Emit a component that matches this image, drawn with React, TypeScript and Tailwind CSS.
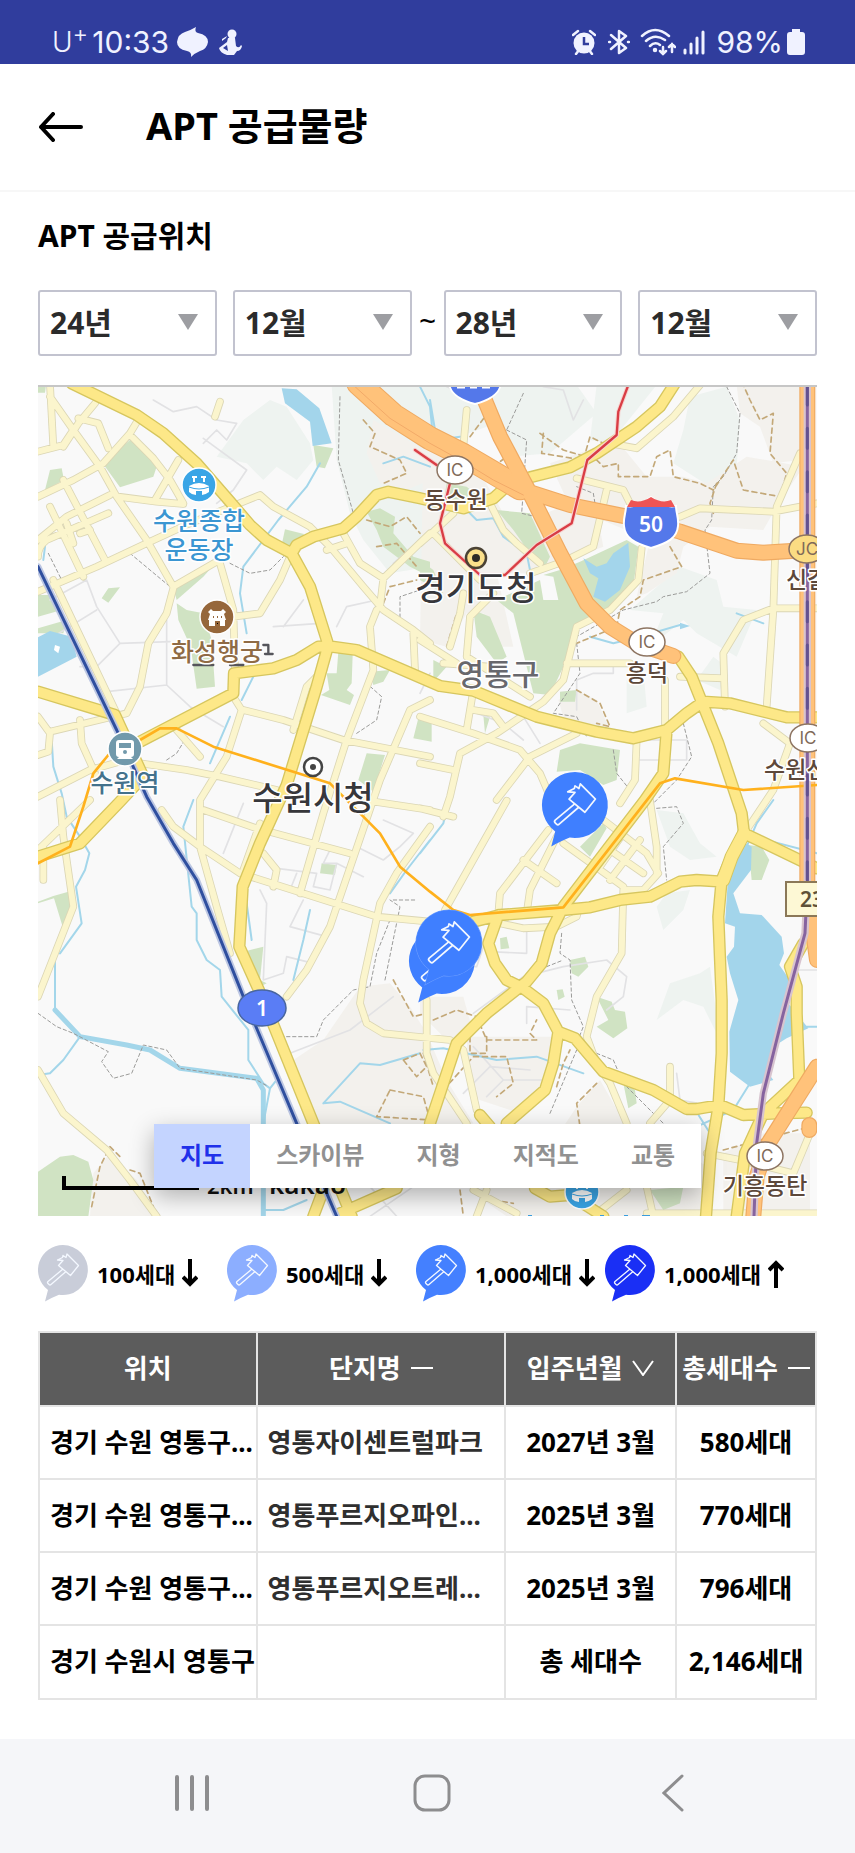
import React, { useState } from 'react';

interface Supply {
  location: string;
  name: string;
  moveIn: string;
  households: string;
}

const supplies: Supply[] = [
  { location: '경기 수원 영통구...', name: '영통자이센트럴파크', moveIn: '2027년 3월', households: '580세대' },
  { location: '경기 수원 영통구...', name: '영통푸르지오파인...', moveIn: '2025년 3월', households: '770세대' },
  { location: '경기 수원 영통구...', name: '영통푸르지오트레...', moveIn: '2025년 3월', households: '796세대' },
];

const legend = [
  { label: '100세대', color: '#c9cdd9', up: false },
  { label: '500세대', color: '#8caeff', up: false },
  { label: '1,000세대', color: '#4480ff', up: false },
  { label: '1,000세대', color: '#1a2ff5', up: true },
];

const mapTypes = ['지도', '스카이뷰', '지형', '지적도', '교통'];
const years = ['24년', '25년', '26년', '27년', '28년'];
const months = ['1월', '2월', '3월', '4월', '5월', '6월', '7월', '8월', '9월', '10월', '11월', '12월'];

const terrain =
  'M560 230L640 120L720 60L770 80L840 190L850 240L800 300L740 260L700 300L650 250ZM905 15L1200 15V560L1080 580L1000 480L960 400L920 240ZM1200 15H1640L1700 100L1560 220L1440 230L1400 130L1200 200ZM1700 15L1880 15L1740 190L1680 180ZM1980 50L2090 20L2130 120L2120 260L2040 320L1930 250L1960 150ZM1950 560L2060 600L2080 680L2180 690L2120 830L2000 760L1960 720L1860 800L1900 700L1800 690ZM2050 830L2090 860L2070 930L2000 900ZM1790 900L1840 870L1850 980L1790 1000ZM1880 1290L1960 1300L2010 1390L2060 1430L1980 1440L1920 1400ZM1880 1580L1910 1540L1980 1530L1960 1590L1900 1650ZM1880 1920L1920 1810L2010 1780L2040 1760L2070 1980L2020 1880L1960 1860Z';
const land =
  'M1030 120L1200 220V300L1130 330L1050 310L1010 220ZM1180 200L1340 260L1420 400L1500 420L1690 340L1720 500L1500 580L1400 580L1450 800L1400 800L1360 700L1310 700L1250 800L1170 780ZM1560 250L1760 180L1850 290L1960 290L2030 310L2150 230L2320 260L2240 380L2200 450L2040 440L1960 500L1940 580L1850 640L1820 650L1860 480L1620 380ZM2120 15H2310V240L2230 250L2190 140L2130 100ZM760 2060L880 1980L990 1820L1080 1810L1140 1880L1190 1960L1250 2100L1330 2230L1180 2260L850 2230ZM1170 1850H1300L1330 1960L1250 1980L1170 1900ZM1310 1970L1580 1970L1560 2080L1470 2200L1320 2150ZM1640 2180L1710 2100L1790 2240L1900 2260L2030 2360V2509H1430L1330 2440L1560 2300ZM2080 2320L2200 2260H2340V2509H2080ZM190 2380L240 2320L320 2400L380 2509H180ZM1585 960L1640 930L1700 960L1740 1050L1600 1010Z';
const parks =
  'M300 180L385 245L370 290L270 322L218 250ZM60 270L95 265L102 300L45 330ZM24 15H48L45 38H24ZM440 670L470 690L520 700L545 780L555 920L500 926L482 800L445 720ZM765 448L822 462L790 512L755 495ZM430 625L560 545L520 590L440 660ZM215 655L235 625L270 622L235 668ZM24 645L75 645L95 690L24 710ZM24 745L110 720L100 760L24 760ZM925 815L968 825L965 910L950 930L972 945L960 975L873 945L898 930L890 880L920 880ZM1010 395L1050 385L1095 410L1090 460L1150 530L1200 545V590L1140 560L1060 500L1040 450ZM1020 875L1080 870L1060 905L1030 915ZM1010 1120L1065 1125L1030 1235L985 1200ZM1165 1015L1205 1025V1085L1150 1075ZM850 195L910 205L885 265L860 260ZM1650 545L1790 480L1825 500L1810 620L1740 700L1630 750L1600 860L1560 945L1510 940L1475 800L1450 700L1400 660L1530 600L1540 660H1585L1570 590L1540 585L1590 570ZM1330 690L1380 710L1430 830L1400 850L1340 770ZM1250 310L1310 320L1360 360L1290 395L1240 370ZM1400 390L1500 400L1560 530L1540 570L1500 520L1450 450ZM1170 540L1210 570L1240 640L1170 600ZM1590 1110L1650 1090L1770 1110L1760 1200L1720 1215L1650 1170L1580 1175ZM1590 935L1640 930L1635 965H1590ZM1210 840L1250 860L1210 905ZM1360 1005L1380 1010L1365 1060ZM24 1565L70 1548L115 1535L125 1580L98 1640L72 1555L24 1570ZM24 2375L90 2330L130 2325L175 2345L190 2400L175 2509H24ZM640 1715L700 1700L690 1800L710 1810L690 1820ZM875 1450L920 1455L915 1485L870 1480ZM1650 1400L1720 1330L1730 1345L1680 1430ZM1410 1675L1430 1670L1438 1705L1412 1708ZM1620 1740L1665 1730L1675 1760L1645 1790L1625 1780ZM1580 1830L1598 1828L1604 1850L1585 1860ZM1700 1940L1735 1920L1700 1850L1745 1865L1755 1890L1785 1895L1792 1945L1750 1975ZM2155 1395L2195 1400L2218 1440L2195 1500H2165ZM1780 2110L1815 2130L1820 2170L1795 2185ZM1860 2430L1960 2420L1950 2470L1900 2490Z';
const lakes =
  'M755 25L800 28L868 85L905 190L848 198L840 125L765 70ZM24 772L60 753L125 770L140 830L24 890ZM1660 535L1700 560L1730 550L1750 520L1795 488L1800 560L1770 630L1725 665L1690 650L1705 595L1680 580ZM2140 1385L2165 1400L2163 1470L2110 1540L2130 1600L2195 1605L2255 1670L2262 1720L2248 1755L2290 1815L2275 1870L2335 1945L2270 1975L2230 2000L2215 2080L2230 2100L2160 2120L2100 2075L2098 1955L2125 1860L2100 1780L2090 1730L2112 1700L2115 1640L2085 1630L2095 1480L2120 1440ZM1950 728L1980 738L1950 748Z';
const streams =
  'M870 250L830 320L745 420L640 560L630 640L650 760M670 890L635 960M600 1010L540 1150M24 470L45 500L40 540M65 1080L70 1160L95 1240L110 1310L150 1370L178 1420L165 1470L138 1520L155 1630L90 1720M75 1740V1890L150 1970L290 1995L360 2010L450 2065L680 2095L720 2125L740 2100M720 2125L700 2230V2509M490 1260L460 1340L485 1580L500 1600V1680L530 1740L570 1770L575 1850L655 1950V2040L700 2110M150 1970L100 2040L60 2080L24 2085M840 1590L820 1680L790 1800M650 1570L665 1680M880 2170L990 2050L1050 2055L1170 2020M880 2170L930 2165L1080 2230M1310 390L1340 420L1390 415L1420 470L1490 520L1500 570M1200 60L1220 180L1290 170M1170 20L1200 80L1210 180M1045 25V80M1060 250L1120 230L1200 260M1680 770L1750 790L1830 770L1950 735M2120 700L2200 730M2230 1260L2180 1330L2150 1400M2170 1370L2361 1420M2160 2110L2110 2190L2000 2240M2040 2260L1990 2180M1200 1380L1130 1470L1080 1540M1260 1250L1240 1330L1170 1420M1180 2010L1240 2005L1400 2040L1520 2030L1660 2080M700 2490L760 2490L830 2460M2330 1940H2361';
const localRoads =
  'M370 60L430 95L500 80L560 120L620 130L590 180L560 150L520 190M520 175L650 270L610 330L560 370M60 660L170 600L200 680L270 790L420 785M270 790L200 860L150 860M230 935L410 915L480 980L580 1040M410 915V720M70 770L200 690M730 740L870 730M760 740L820 660M920 740L950 680L1040 660M1090 550L1170 480M1250 20L1300 40M1540 20L1600 30L1630 120L1660 60M1640 990L1640 900L1690 880H1750V860M1830 1080H1970V1140H1830M580 1420L640 1270M690 1530L710 1570L700 1800L760 1780L770 1730L850 1750M780 1640L820 1560M780 1640L890 1670M740 1465L860 1480L850 1520L900 1530L920 1450L880 1450L900 1410M920 1450L1000 1490M800 1480L780 1530M1060 1320L1150 1360L1110 1400L1060 1440L980 1400M780 2020L960 1950L1090 1850M1380 1715L1490 1720V1640M1330 1900L1480 1790L1600 1760L1730 1740L1790 1790L1780 1850L1730 1890M1490 1930V1880L1620 1890M1330 2000L1420 2100L1370 2150M1420 2100L1540 2100M1300 2140L1380 2060L1500 2070M1940 2080L1950 2160L2060 2180M1150 2420L1020 2509M1020 2420L1100 2509M1170 1760H1340L1360 1700M1200 1020L1250 1040M1200 880L1170 940M1340 1000L1420 1030L1480 1080M1480 1010L1530 1090M2290 1770H2361';
const minorRoads =
  'M60 15L70 200M24 215L100 195L130 150M60 50L130 150L210 260L260 350L350 480L430 620M195 70L145 130L100 200M145 115L205 130L235 205M24 350L130 300L220 250L300 160L330 110M300 165L370 235L420 300L460 370M24 480L110 410L240 345M265 350L380 365L460 372M445 240L375 360M100 300L225 540M60 380L160 590M24 635L200 560L350 490L480 430L690 345L730 380L840 440L900 500L1000 620L1060 690L1150 750L1200 790M24 530Q24 500 50 480L235 400M110 430L130 490M150 460L180 450M430 620L560 545M430 625L410 700L355 790L330 920L290 1000L60 1055M24 1010L60 1060L55 1115L24 1125M150 1020L155 1090L200 1190M570 550L610 690L615 870M610 710L690 700L750 600L780 530M24 1250L180 1170L270 1145M70 600L260 1000M440 1050L510 1130M640 990L760 1020L940 1080L1200 1130M610 950L635 990L590 1130L510 1260V1400L560 1580L600 1720M330 1150L470 1170L570 1190L740 1230M880 870L830 920L790 1050M1040 690L1020 740L1030 870L950 1080L880 1300L810 1540M1150 760L1155 870M1200 960L1140 990L1050 1200L920 1580L900 1640L830 1770L770 1850M940 460L990 550L1060 595L1200 460M1060 595L1050 680M890 510L950 490M570 65L555 110M1310 90L1300 200M1170 490L1210 455L1270 400M1385 380L1420 450L1460 490L1530 550M1210 460L1350 600M1500 580L1600 545L1690 500L1730 330M1640 295L1780 330L1800 370M1835 505L1825 600L1740 690L1640 740L1600 900L1540 965M1610 850H1800M1170 780L1280 850M1300 640L1290 700L1260 800M1390 640L1320 710L1310 830L1500 950M1240 850L1380 860M1540 965L1400 1060L1290 1120L1260 1250L1240 1310M1330 930L1310 1050M1330 990L1390 1000L1420 1040M1170 1010L1330 1060L1470 1110L1530 1180L1560 1250M1170 1150L1270 1170M1640 1060L1500 1130L1400 1260M1200 1340L1100 1480L1050 1570L1000 1800L990 1870L1010 1930L1060 1960L1260 1980L1300 2010L1340 2190M1820 1080L1815 1200L1770 1270M1905 900V1040M1950 890L2080 895M2361 685H2230L2140 720L2080 820L2085 980M1950 410L2010 385L2230 395L2361 370M2310 220L2240 380L2230 690L2210 980M2010 15L1930 110L1820 205L1740 190M2200 1030L2280 1090L2230 1230L2150 1350M24 1850L130 1580L100 1370L90 1260M24 1410L180 1260M395 1290L430 1340L510 1400L630 1480L1040 1610L1200 1625M520 1290L680 1345L960 1420M700 1420L740 1470L730 1520M690 1330L640 1470M40 1500V1400M1000 1260L1200 1290M24 2070L100 2200L230 2310L300 2400L380 2509M1190 1860V2020L1210 2080L1310 2230M1430 1262L1245 1590M1170 1285L1270 1310M1555 1350L1410 1540L1405 1600M1580 1370L1500 1530L1490 1600M1480 1440L1580 1510M1600 1390L1780 1520M1720 1320L1850 1420L1885 1480L1840 1530H1780L1775 1720L1700 1850L1670 1970L1700 2050L1740 2110L1790 2230M1860 1262L1880 1400V1480M1830 1380L1740 1500M1780 1360L1710 1460M1740 1410L1840 1480M1410 1630L1480 1645L1580 1640L1640 1610L1645 1590M1920 2060V2160L1860 2230M2030 2320L2130 2340L2290 2380L2340 2260M1850 2500H2361M1330 2430L1460 2500M1850 2420L1870 2509M1340 2509L1370 2430M1700 2500L1790 2430';
const mainRoads =
  'M125 10L320 105L400 160L500 250L600 365L660 435L710 480L785 520L840 620L895 795L860 920L770 1215L690 1390L638 1520L628 1700L700 1860L850 2230L965 2509M785 520L800 495L850 470L940 445L980 410L1040 345L1075 335L1170 355L1300 385L1390 355L1440 310L1500 292L1620 262L1700 220L1820 140L1890 80L1935 10M24 935L255 1005L340 1190L270 1265L150 1390L24 1430M330 1085L610 940L612 880L730 865L800 840L865 800H905L980 810L1230 918L1330 932L1520 1010L1700 1055L1810 1075L1910 1050L1970 1000L2020 965L2100 970L2270 1012H2361M1945 830L1985 890L2015 965L2065 1090L2135 1300L2142 1360L2105 1430L2075 1500L2065 1610L2075 1860V2020L2065 2180L2042 2320L2028 2509M1910 1050L1900 1180L1845 1260L1600 1580L1560 1660L1535 1750L1490 1805L1370 1900L1280 1990L1240 2110L1200 2230M1330 1625L1410 1605L1600 1590L1680 1582L1770 1560L1860 1550L1950 1505L2000 1500L2075 1505M1405 1605L1375 1690L1395 1750L1430 1800L1480 1825L1540 1870L1585 1955L1570 2050L1545 2130L1430 2230M1585 1955L1635 1975L1720 2075L1870 2130L1970 2187H2000L2070 2175L2140 2205L2240 2200L2330 2198M2142 1360L2361 1465M2320 1690L2280 1760L2300 1820V1900L2308 2100L2200 2200L2145 2320L2120 2509M850 2509L880 2430M930 2500L1100 2425M1515 2425L1560 2450L1620 2445L1720 2509M1350 2205L1380 2240';
const lakeRoads = 'M2142 1360L2105 1430L2080 1500';
const highways =
  'M985 10L1090 105L1200 180L1300 225L1480 330L1620 375L1790 410L1950 455L2120 512L2200 518L2330 510M1360 50L1410 170L1500 340L1590 520L1670 670L1740 740L1820 790L1930 828M2332 10V1530L2361 1740M2361 2060L2215 2290L2180 2390L2170 2509M2338 2235V2250';
const borders =
  'M300 520L420 620M600 550L660 580L720 570L760 530M55 520L95 600M980 1060L1040 1020L1055 950L1010 910M930 50L925 240L970 400M1110 730V650L1170 630M410 1140L440 1120L470 1070M24 1900L80 1940L130 1960L235 2015L215 2045L250 2095L305 2080L340 1995L410 2010L450 2065L680 2100L715 2120M1065 1800L1110 1580L1080 1560M1090 1560H1160M1080 1620L1040 1720L1020 1820L970 1830L880 1920L860 1970L760 1970M1430 150L1490 180L1480 320M1480 40L1430 150M1480 330L1475 400L1560 420M1640 320L1690 340L1700 400M2090 20L2130 100L2120 220L2080 290L2050 320L2045 420L2025 450L2040 580L1970 635L1900 650L1880 665L1780 690L1640 770M1640 790L1650 880L1570 1000L1640 1010L1670 1070M1960 1030L1985 1130L1940 1200L1860 1280M1750 1110L1760 1180L1800 1230M1880 1285L1940 1280L1960 1330L1900 1400L1910 1500M1595 1660L1590 1720L1620 1740L1625 1860L1660 1940L1640 1990M1550 1760L1600 1740M1700 2020L1750 2040L1780 2110L1900 2230M1560 2200L1640 2010';
const parkTrails =
  'M1000 120L1035 160L1020 200L1110 240L1130 280L1060 310M1010 420L1080 440L1130 410L1170 460M1040 500L1100 490L1160 560M1060 670L1080 620L1160 600M1530 160L1600 210L1700 240L1720 260L1765 250V290L1860 290L1880 230L1920 210L1930 290L2010 310L2050 330L2110 240L2140 330L2250 350L2270 280L2220 220L2230 100L2190 120L2160 60L2140 15M1540 160L1535 220L1660 240L1680 170L1740 200M1320 170L1380 90L1350 20M1390 260L1430 230M1920 500L1955 560L1840 600L1830 650L1770 690L1760 740L1640 790M2060 310L2040 370L2050 400M1250 800L1280 700M1640 930L1710 970L1740 1040L1700 1030M1090 1800L1150 1910L1190 1900M1120 2040L1170 2020L1190 2060L1160 2090ZM1080 2130L1180 2150L1200 2220L1040 2210ZM1210 1920L1280 1890L1340 1910L1370 1980H1520L1500 1960L1520 1920M1320 1970V2020H1370V1970M1580 2120L1600 2050L1620 2010M1700 2110L1640 2170L1650 2240M1240 2130L1330 2030L1430 2030L1450 2110L1400 2150M1180 2020L1210 2120M185 2480L210 2360L240 2300L270 2330M300 2370L330 2380L370 2480M2080 2310L2340 2240M1290 2430L1300 2509M1390 2460L1450 2470';

const subwaySuin =
  'M330 1080L390 1045H440L550 1100L900 1210L1000 1310L1050 1360L1110 1460L1200 1535L1270 1590L1320 1605L1600 1582L1890 1210L1935 1195L2140 1230L2361 1215M235 1125L190 1180L160 1280L120 1400L24 1450';
const subwayShinbundang =
  'M1155 210L1220 255M1260 310L1230 430L1245 490L1350 585H1425L1520 495L1625 430L1672 240L1760 165L1765 95L1795 15';
const subwayLine1 = 'M24 560L260 1050L350 1250L430 1390L500 1500L640 1850L800 2230L920 2509';
const railway = 'M2332 15V1510L2325 1660L2260 1900L2200 2140L2180 2290L2172 2509';

const pinBody = 'M25 0a25 25 0 1 1-4 49.7Q15 52 7 56.5L10 45A25 25 0 0 1 25 0Z';

const PinShape: React.FC<{ color: string }> = ({ color }) => (
  <>
    <path d={pinBody} fill={color} />
    <g fill="none" stroke="#f4f8ff" strokeWidth="1.3" strokeLinejoin="round">
      <path d="M29 9L40.500 20.500L32.500 30.500L20.500 20.500L25 15.500L19.500 15L24.500 12.500L25 10.500L28 12.500Z" />
      <path d="M25 24L10 36.500Q9 37.500 10 38.500L11 39.500Q12 40.500 13 39.500L28 26.500" />
    </g>
  </>
);

const Interchange: React.FC<{ x: number; y: number; label?: string; junction?: boolean }> = ({ x, y, label = 'IC', junction }) => (
  <g>
    <ellipse cx={x} cy={y} rx="18" ry="14" fill={junction ? '#fbdc83' : '#fff'} stroke="#8e7562" strokeWidth="1.500" />
    <text x={x} y={y + 6} textAnchor="middle" fontSize="17" fill="#806a58" fontFamily="Inter, sans-serif">{label}</text>
  </g>
);

const stadium = (
  <>
    <path d="M-10 1Q0-5 10 1V7Q6 10 3 10V6H-3V10Q-7 10-10 7Z" fill="#fff" />
    <path d="M-5-3V-8M5-3V-8M-7-8H-2M2-8H7" stroke="#fff" strokeWidth="2" />
    <path d="M-10 2Q0 6 10 2" stroke="#3aa5e6" fill="none" />
  </>
);

const MapCanvas: React.FC = () => (
  <svg
    role="img"
    aria-label="수원시 영통구 지도"
    viewBox="38 387 779 829"
    preserveAspectRatio="xMidYMid slice"
    className="block h-full w-full bg-[#f9f9f9]"
  >
    <g transform="translate(30 380) scale(0.33333)" fill="none" strokeLinejoin="round" strokeLinecap="round">
      <path d={terrain} fill="#eef3f0" />
      <path d={land} fill="#f3f1ed" />
      <path d={parks} fill="#d0e3c3" />
      <path d={localRoads} stroke="#e2e2e4" strokeWidth="5" />
      <path d={streams} stroke="#a3d6ea" strokeWidth="6" />
      <path d="M75 1890L150 1970L290 1995L360 2010L450 2065L680 2095L700 2130V2509" stroke="#a3d6ea" strokeWidth="15" />
      <path d={lakes} fill="#a3d5eb" />
      <path d="M75 795L90 800L85 820L72 810Z" fill="#fff" />
      <path d={borders} stroke="#9b9b99" strokeWidth="3" strokeDasharray="10 8" />
      <path d={parkTrails} stroke="#c3a878" strokeWidth="5" strokeDasharray="15 12" />
      <path d={minorRoads} stroke="#dbd6b4" strokeWidth="23" />
      <path d={minorRoads} stroke="#fbf5cd" strokeWidth="18" />
      <path d={mainRoads} stroke="#d6c65f" strokeWidth="37" />
      <path d={lakeRoads} stroke="#d6c65f" strokeWidth="42" />
      <path d={mainRoads} stroke="#fde888" strokeWidth="29" />
      <path d={lakeRoads} stroke="#fde888" strokeWidth="36" />
      <path d={highways} stroke="#efaa62" strokeWidth="48" />
      <path d="M985 10L1090 105L1200 175L1300 225L1470 325" stroke="#efaa62" strokeWidth="72" />
      <path d="M985 10L1090 105L1200 175L1300 225L1470 325" stroke="#ffc27a" strokeWidth="66" />
      <path d={highways} stroke="#ffc27a" strokeWidth="41" />
      <path d="M975 20L1080 115L1200 190L1300 245L1390 300L1480 345" stroke="#f2aa68" strokeWidth="3" />
      <path d={subwaySuin} stroke="#ffb11d" strokeWidth="8" />
      <path d={subwayShinbundang} stroke="#f7d3cf" strokeWidth="13" />
      <path d={subwayShinbundang} stroke="#d93d45" strokeWidth="7" />
      <path d={subwayLine1} stroke="#bcc6e2" strokeWidth="20" />
      <path d={subwayLine1} stroke="#2f4f9f" strokeWidth="9" />
      <path d={railway} stroke="#d8c4cf" strokeWidth="22" />
      <path d={railway} stroke="#86639f" strokeWidth="9" />
      <path d="M2332 15V1500" stroke="#63518f" strokeWidth="9" strokeDasharray="60 70" />
      <path d="M490 855H550M600 855H640M700 795H715V822M705 822H728" stroke="#55555b" strokeWidth="7" />
    </g>

    {/* road numbers */}
    <path d="M449 380H501C502 392 491 400 475 404C459 400 448 392 449 380Z" fill="#5478ea" stroke="#fff" strokeWidth="2" />
    <path d="M457 387H465M470 387H477M482 387H490" stroke="#fff" strokeWidth="3" />
    <path d="M626 506C635 508 644 503 651 497C658 503 667 508 676 506C676 513 679 518 678 526C677 538 668 543 651 548C634 543 625 538 624 526C623 518 626 513 626 506Z" fill="#5478ea" stroke="#fff" strokeWidth="2" />
    <path d="M627 507L631 500Q640 504 651 497Q662 504 671 500L675 507Z" fill="#ee5455" />
    <ellipse cx="262" cy="1008" rx="24" ry="18" fill="#5a7df5" stroke="#49669f" strokeWidth="1.500" />
    <rect x="786" y="882" width="40" height="34" fill="#fdf8d5" stroke="#8b7858" strokeWidth="2" />
    <g fontFamily="'Noto Sans', sans-serif" fontWeight="600" fontSize="21">
      <text x="651" y="532" textAnchor="middle" fill="#fff">50</text>
      <text x="262" y="1016" textAnchor="middle" fill="#fff">1</text>
      <text x="800" y="907" fill="#5f5138">23</text>
    </g>

    <Interchange x={455} y={470} />
    <Interchange x={647} y={642} />
    <Interchange x={807} y={549} label="JC" junction />
    <Interchange x={808} y={738} />
    <Interchange x={765} y={1156} />

    {/* places */}
    <g transform="translate(199 485)">
      <circle r="17" fill="#3aa5e6" stroke="#fff" strokeWidth="1.500" />
      {stadium}
    </g>
    <g transform="translate(217 617)">
      <circle r="17" fill="#96673b" stroke="#fff" strokeWidth="1.500" />
      <path d="M-9-5L-6-8L-4-6H4L6-8L9-5L7-3L9 3H8V9H-8V3H-9L-7-3Z" fill="#fff" />
      <path d="M-4 0H-3M0 0H1M4 0H5M-1 8V5H2V8Z" stroke="#96673b" strokeWidth="2" />
    </g>
    <g transform="translate(125 749)">
      <circle r="17" fill="#7199ab" stroke="#fff" strokeWidth="1.500" />
      <path d="M-6-9H6Q9-9 9-6V5Q9 8 6 8L8 10H-8L-6 8Q-9 8-9 5V-6Q-9-9-6-9Z" fill="#fff" />
      <path d="M-6-6H6V-1H-6Z" fill="#7199ab" />
      <circle cy="3" r="2" fill="#7199ab" />
    </g>
    <g transform="translate(582 1192)">
      <circle r="17" fill="#3aa5e6" stroke="#fff" strokeWidth="1.500" />
      {stadium}
    </g>
    <path d="M528 1216H532M600 1216H604M624 1216H628M642 1216H650" stroke="#3b9fe0" strokeWidth="2" />
    <circle cx="313" cy="767" r="9" fill="#fff" stroke="#444" strokeWidth="2.500" />
    <circle cx="313" cy="767" r="3" fill="#444" />
    <circle cx="476" cy="558" r="10" fill="#fbe08b" stroke="#4a4234" strokeWidth="2.500" />
    <circle cx="476" cy="558" r="4" fill="#2d2a26" />

    <g
      fontFamily="'Noto Sans CJK KR', sans-serif"
      fontWeight="500"
      stroke="#fff"
      strokeWidth="3"
      strokeLinejoin="round"
      paintOrder="stroke"
      textAnchor="middle"
    >
      <g fontSize="33" fill="#37373b">
        <text x="476" y="600">경기도청</text>
        <text x="313" y="810">수원시청</text>
      </g>
      <text x="498" y="685" fontSize="30" fill="#68686d">영통구</text>
      <g fontSize="25">
        <text x="199" y="530" fill="#3b96d2">수원종합</text>
        <text x="199" y="559" fill="#3b96d2">운동장</text>
        <text x="217" y="661" fill="#8f6b45">화성행궁</text>
        <text x="125" y="792" fill="#44728c">수원역</text>
      </g>
      <g fontSize="23" fill="#5d483a">
        <text x="456" y="508">동수원</text>
        <text x="647" y="681">흥덕</text>
        <text x="765" y="1194">기흥동탄</text>
        <text x="786" y="588" textAnchor="start">신갈</text>
        <text x="764" y="778" textAnchor="start">수원신갈</text>
      </g>
    </g>

    {/* scale */}
    <path d="M64 1176V1188H199" fill="none" stroke="#000" strokeWidth="4" />
    <g fontFamily="'Noto Sans', sans-serif" fontWeight="600" fill="#111">
      <text x="207" y="1194" fontSize="22">2km</text>
      <text x="269" y="1194" fontSize="26">kakao</text>
    </g>

    <g transform="translate(542 772) scale(1.320)"><PinShape color="#3f7fff" /></g>
    <g transform="translate(409 928) scale(1.320)"><PinShape color="#3f7fff" /></g>
    <g transform="translate(416 910) scale(1.320)">
      <path d={pinBody} fill="none" stroke="#6f9fff" strokeWidth="0.800" />
      <PinShape color="#3f7fff" />
    </g>
  </svg>
);

const StatusBar: React.FC = () => (
  <div className="flex h-16 items-end justify-between bg-[#303d9d] pr-[50px] pb-1 pl-[52px] font-['Inter',sans-serif] text-[30px] leading-9 font-normal text-[#f0f2ff]">
    <div className="flex items-center">
      <span className="text-[28px] font-light">U</span>
      <span className="mr-1 -mt-4 text-[24px] font-light">+</span>
      <span className="mr-2">10:33</span>
      <svg width="32" height="30" viewBox="0 0 32 30" className="mr-[10px]" fill="currentColor" aria-hidden="true">
        <path d="M19 0Q17 5 21 6Q31 8 31 15Q30 22 23 24Q18 26 14 30Q15 25 10 24Q0 22 0 15Q1 7 8 5Q14 3 19 0Z" />
      </svg>
      <svg width="24" height="26" viewBox="0 0 24 26" fill="currentColor" aria-hidden="true">
        <circle cx="13" cy="5" r="4.500" />
        <path d="M9 9H16L17 17Q20 20 22 16L23 17Q22 22 18 22L15 26H8Q1 24 0 19L8 13ZM3 10L8 7L7 9L3 12Z" />
        <path d="M4 19L8 16L9 22Z" fill="#303d9d" />
      </svg>
    </div>
    <div className="flex items-center">
      <svg width="24" height="26" viewBox="0 0 24 26" className="mr-3" aria-hidden="true">
        <path d="M1 6L6 2M23 6L18 2M4 25L7 21M20 25L17 21" stroke="currentColor" strokeWidth="2.500" strokeLinecap="round" />
        <circle cx="12" cy="14" r="10.500" fill="currentColor" />
        <path d="M12 8V15H17" stroke="#303d9d" strokeWidth="2.500" fill="none" />
      </svg>
      <svg width="22" height="26" viewBox="0 0 22 26" className="mr-[10px]" fill="none" stroke="currentColor" strokeWidth="2.500" strokeLinejoin="round" strokeLinecap="round" aria-hidden="true">
        <path d="M3 6L18 19L11 24V2L18 7L3 20M1 13H2M20 13H21" />
      </svg>
      <svg width="36" height="28" viewBox="0 0 36 28" className="mr-[6px]" fill="none" stroke="currentColor" strokeWidth="2.500" strokeLinecap="round" aria-hidden="true">
        <path d="M2 8Q15-4 29 8M6 13Q15 5 25 12M10 18Q15 13 20 17M23 19V26M20 23L23 26L26 23M32 24V16M29 19L32 16L35 19" />
        <circle cx="15" cy="22" r="1" fill="currentColor" />
      </svg>
      <svg width="24" height="26" viewBox="0 0 24 26" className="mr-[10px]" fill="none" stroke="currentColor" strokeWidth="3" strokeLinecap="round" aria-hidden="true">
        <path d="M3 24V21M9 24V15M15 24V9M21 24V3" />
      </svg>
      <span className="mr-1">98%</span>
      <svg width="18" height="26" viewBox="0 0 18 26" fill="currentColor" aria-hidden="true">
        <path d="M5 0H13V3H15Q18 3 18 6V23Q18 26 15 26H3Q0 26 0 23V6Q0 3 3 3H5Z" />
      </svg>
    </div>
  </div>
);

const DateSelect: React.FC<{ label: string; options: string[]; value: string }> = ({ label, options, value }) => (
  <div className="relative flex-1">
    <select
      aria-label={label}
      defaultValue={value}
      className="h-[66px] w-full appearance-none rounded-[3px] border-2 border-[#c2c3cf] bg-white pb-[2px] pl-[10px] text-[30px] font-bold text-[#2b2b2b]"
    >
      {options.map(option => (
        <option key={option}>{option}</option>
      ))}
    </select>
    <svg width="20" height="16" viewBox="0 0 20 16" className="pointer-events-none absolute top-6 right-[19px]" aria-hidden="true">
      <path d="M0 0H20L10 16Z" fill="#9d9ea2" />
    </svg>
  </div>
);

const SortIcon: React.FC<{ down?: boolean }> = ({ down }) => (
  <svg width="22" height="16" viewBox="0 0 22 16" fill="none" stroke="#fff" strokeWidth="2" className="shrink-0" aria-hidden="true">
    <path d={down ? 'M1 1L11 15L21 1' : 'M0 8H22'} />
  </svg>
);

const App: React.FC = () => {
  const [mapType, setMapType] = useState('지도');

  return (
    <div className="flex min-h-screen flex-col bg-white font-['Noto_Sans','Noto_Sans_CJK_KR',sans-serif] text-black">
      <StatusBar />

      <header className="flex h-32 items-center border-b-2 border-[#f7f7f7] pl-[38px]">
        <button type="button" aria-label="뒤로" className="mr-[62px]">
          <svg width="46" height="30" viewBox="0 0 46 30" fill="none" stroke="#000" strokeWidth="4" strokeLinecap="round" strokeLinejoin="round">
            <path d="M15 2L3 15L15 28M3 15H43" />
          </svg>
        </button>
        <h1 className="pb-1 text-[38px] leading-[48px] font-bold">APT 공급물량</h1>
      </header>

      <main className="flex-1 px-[38px] pt-6 pb-[38px]">
        <h2 className="text-[30px] leading-10 font-bold">APT 공급위치</h2>

        <div className="mt-[34px] flex items-center gap-4">
          <DateSelect label="시작 연도" options={years} value="24년" />
          <DateSelect label="시작 월" options={months} value="12월" />
          <span className="-mx-4 w-8 pb-1 text-center text-[30px] leading-8">~</span>
          <DateSelect label="종료 연도" options={years} value="28년" />
          <DateSelect label="종료 월" options={months} value="12월" />
        </div>

        <section className="relative mt-[29px] h-[831px] overflow-hidden border-t-2 border-[#c6c6c6]">
          <MapCanvas />
          <div className="absolute inset-x-0 bottom-7 flex justify-center">
            <div className="flex h-16 bg-white shadow-[0_8px_24px_rgba(0,0,0,0.3)]">
              {mapTypes.map(type => (
                <button
                  key={type}
                  type="button"
                  onClick={() => setMapType(type)}
                  className={
                    type === mapType
                      ? 'bg-[#c4d4ff] px-[26px] pb-[2px] text-[24px] font-bold text-[#2030ea]'
                      : 'px-[26px] pb-[2px] text-[24px] font-bold text-[#919191]'
                  }
                >
                  {type}
                </button>
              ))}
            </div>
          </div>
        </section>

        <ul className="mt-[29px] grid grid-cols-4 pr-[23px]">
          {legend.map(item => (
            <li key={item.color} className="flex items-center whitespace-nowrap">
              <svg width="50" height="57" viewBox="0 0 50 57" className="shrink-0" aria-hidden="true">
                <PinShape color={item.color} />
              </svg>
              <span className="ml-[9px] text-[22px] leading-8 font-bold">{item.label}</span>
              <svg width="16" height="30" viewBox="0 0 16 30" className="ml-[7px] shrink-0" fill="none" stroke="#000" strokeWidth="4" aria-hidden="true">
                <path d={item.up ? 'M8 29V3M1 11L8 4L15 11' : 'M8 0V26M1 18L8 25L15 18'} />
              </svg>
            </li>
          ))}
        </ul>

        <table className="mt-[29px] w-full table-fixed border-collapse text-center text-[26px] leading-9 font-bold whitespace-nowrap">
          <colgroup>
            <col className="w-[28%]" />
            <col className="w-[32%]" />
            <col className="w-[22%]" />
            <col className="w-[18%]" />
          </colgroup>
          <thead>
            <tr className="h-[74px] bg-[#5c5c5c] text-white">
              <th className="border-2 border-[#e4e4e4] pb-[2px]">위치</th>
              <th className="border-2 border-[#e4e4e4] pb-[2px]">
                <button type="button" className="inline-flex items-center gap-[10px]">단지명 <SortIcon /></button>
              </th>
              <th className="border-2 border-[#e4e4e4] pb-[2px]">
                <button type="button" className="inline-flex items-center gap-[10px]">입주년월 <SortIcon down /></button>
              </th>
              <th className="border-2 border-[#e4e4e4] pb-[2px]">
                <button type="button" className="inline-flex items-center gap-[10px]">총세대수 <SortIcon /></button>
              </th>
            </tr>
          </thead>
          <tbody>
            {supplies.map(item => (
              <tr key={item.name} className="h-[73px]">
                <td className="border-2 border-[#e4e4e4] pb-[2px] pl-[10px] text-left">{item.location}</td>
                <td className="border-2 border-[#e4e4e4] pb-[2px] pl-[10px] text-left text-[#2f2f2f]">{item.name}</td>
                <td className="border-2 border-[#e4e4e4] pb-[2px]">{item.moveIn}</td>
                <td className="border-2 border-[#e4e4e4] pb-[2px]">{item.households}</td>
              </tr>
            ))}
            <tr className="h-[74px]">
              <td className="border-2 border-[#e4e4e4] pb-[2px] pl-[10px] text-left">경기 수원시 영통구</td>
              <td className="border-2 border-[#e4e4e4]"></td>
              <td className="border-2 border-[#e4e4e4] pb-[2px]">총 세대수</td>
              <td className="border-2 border-[#e4e4e4] pb-[2px]">2,146세대</td>
            </tr>
          </tbody>
        </table>
      </main>

      <nav className="grid h-[114px] grid-cols-3 items-center justify-items-center bg-[#f5f6f9] pr-[62px] pb-[6px] pl-[72px]">
        <button type="button" aria-label="최근 앱">
          <svg width="36" height="38" viewBox="0 0 36 38" stroke="#8d8d8f" strokeWidth="4" strokeLinecap="round">
            <path d="M3 3V35M18 3V35M33 3V35" />
          </svg>
        </button>
        <button type="button" aria-label="홈">
          <svg width="38" height="38" viewBox="0 0 38 38" fill="none" stroke="#8d8d8f" strokeWidth="3">
            <rect x="2" y="2" width="34" height="34" rx="10" />
          </svg>
        </button>
        <button type="button" aria-label="뒤로 가기">
          <svg width="22" height="38" viewBox="0 0 22 38" fill="none" stroke="#8d8d8f" strokeWidth="3" strokeLinecap="round">
            <path d="M20 2L2 19L20 36" />
          </svg>
        </button>
      </nav>
    </div>
  );
};

export default App;
